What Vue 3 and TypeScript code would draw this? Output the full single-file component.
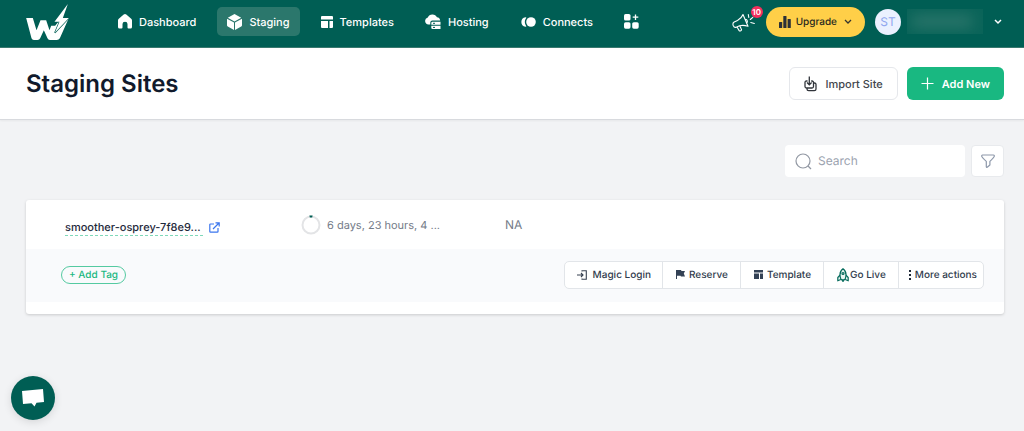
<script setup lang="ts">
import { ref } from 'vue'

const search = ref('')
const current = ref('Staging')
const nav: string[] = ['Dashboard', 'Staging', 'Templates', 'Hosting', 'Connects']
</script>

<template>
  <div class="page">
    <header class="topbar">
      <a class="logo" href="#" aria-label="Home">
        <svg viewBox="78 12 128 108" width="43" height="36" fill="#fff">
          <path d="M78 54H98L109 91L121 61H138L148 91L153 77H165L184 54H206L179 115Q176 120 170 120H149Q144 120 142 115L131 91L120 115Q118 120 112 120H101Q96 120 94 115Z" />
          <path d="M203 12L163 65H178L164 98L206 54H188Z" stroke="#005e54" stroke-width="4" />
          <path d="M203 12L163 65H178L164 98L206 54H188Z" />
        </svg>
      </a>
      <nav class="nav" aria-label="Main">
        <a v-for="item in nav" :key="item" href="#" class="nav-item" :class="{ active: item === current }" @click.prevent="current = item">
          <svg v-if="item === 'Dashboard'" viewBox="0 0 14 15" width="14" height="15" fill="#fff"><path d="M0 6.500Q0 5.500.8 4.800L5.700.6Q7-.4 8.300 .6L13.200 4.800Q14 5.500 14 6.500V13Q14 14.500 12.500 14.500H10.500Q9.500 14.500 9.500 13.500V10Q9.500 7.700 7 7.700T4.500 10V13.500Q4.500 14.500 3.500 14.500H1.500Q0 14.500 0 13Z" /></svg>
          <svg v-else-if="item === 'Staging'" viewBox="0 0 15 16" width="15" height="16" fill="#fff"><path d="M7.500 0L14.200 3.700L7.500 7.400L.8 3.700ZM0 4.700L7 8.500V16L.8 12.600Q0 12.100 0 11.200ZM15 4.700L8 8.500V16L14.200 12.600Q15 12.100 15 11.200Z" /></svg>
          <svg v-else-if="item === 'Templates'" viewBox="0 0 12 12" width="12" height="12" fill="#fff"><path d="M1 0H11Q12 0 12 1V3.500H0V1Q0 0 1 0ZM0 5H7V12H1Q0 12 0 11ZM8.500 5H12V11Q12 12 11 12H8.500Z" /></svg>
          <svg v-else-if="item === 'Hosting'" viewBox="0 0 16 15" width="16" height="15" fill="#fff"><path d="M3.500 10.500A3.500 3.500 0 0 1 2.800 3.600A5 5 0 0 1 12 3.300Q14.500 3.300 15.200 6.500H7.500Q5.300 6.500 5.300 8.500V10.500Z" /><path d="M7.500 7.700H15.500V10.800H6.300V9Q6.300 7.700 7.500 7.700ZM6.300 11.800H15.500V15H7.500Q6.300 15 6.300 13.800Z" /><path d="M8 9.300H10M8 13.400H10" stroke="#005e54" /></svg>
          <svg v-else viewBox="0 0 16 10" width="16" height="10" fill="#fff"><circle cx="11" cy="5" r="4.800" /><path d="M5.500 .2A4.850 4.850 0 0 0 5.500 9.800L6.400 9.500Q3.200 5 6.400 .5Z" /></svg>
          <span>{{ item }}</span>
        </a>
        <a class="nav-item" href="#" aria-label="Apps">
          <svg viewBox="0 0 15 15" width="15" height="15" fill="#fff"><rect width="6.500" height="6.500" rx="1.600" /><rect y="8.200" width="6.500" height="6.500" rx="1.600" /><rect x="8.200" y="8.200" width="6.500" height="6.500" rx="1.600" /><path d="M11.500 .5V6M8.700 3.200H14.300" stroke="#fff" stroke-width="1.300" /></svg>
        </a>
      </nav>
      <div class="account">
        <button class="news" type="button" aria-label="Announcements, 10 new">
          <svg viewBox="0 0 24 20" width="24" height="20" fill="none" stroke="#fff" stroke-width="1.100" stroke-linejoin="round" stroke-linecap="round"><path d="M5.500 8.500L2.200 10Q.3 11.100 1.200 13.500Q2.200 15.900 4.200 15.200L7.500 13.800Q11.500 12.800 16 14.300L11 2.500Q9.500 6.300 5.500 8.500ZM5 15L7 18.400Q7.700 19.400 8.800 18.700T9.300 17L7.800 14M13.300 7.200Q15 7.200 15.300 8.800T14.500 11M16.800 5.500L16.300 2.500M18.300 7.500L20.800 5.300M18.800 10.500L22.300 11.500" /></svg>
          <span class="badge">10</span>
        </button>
        <button class="upgrade" type="button">
          <svg viewBox="0 0 12 12" width="12" height="12" fill="#2b3037"><rect y="6" width="3.200" height="6" rx=".6" /><rect x="4.300" width="3.200" height="12" rx=".6" /><rect x="8.600" y="3" width="3.200" height="9" rx=".6" /></svg>
          <span>Upgrade</span>
          <svg viewBox="0 0 8 6" width="8" height="6" fill="none" stroke="#35342e" stroke-width="1.300"><path d="M1 1L4 4L7 1" /></svg>
        </button>
        <span class="avatar">ST</span>
        <span class="user-name" aria-hidden="true"><i></i></span>
        <button class="user-menu" type="button" aria-label="Account menu">
          <svg viewBox="0 0 8 6" width="8" height="6" fill="none" stroke="#fff" stroke-width="1.500"><path d="M1 1L4 4L7 1" /></svg>
        </button>
      </div>
    </header>

    <section class="heading">
      <h1>Staging Sites</h1>
      <div class="heading-actions">
        <button class="btn import" type="button">
          <svg viewBox="0 0 13 16" width="13" height="16" fill="none" stroke="#30343a" stroke-width="1.300"><path d="M3.500 5H2.500Q1 5 1 6.500V10.500Q1 12 2.500 12H8Q9.500 12 9.500 10.500V6.500Q9.500 5 8 5H7.200M5.300 .5V8.500M3 6.500L5.300 8.800L7.600 6.500M3 12V13Q3 14.700 4.700 14.700H10.300Q12 14.700 12 13V8.500Q12 7 10.500 7H9.500" /></svg>
          Import Site
        </button>
        <button class="btn add" type="button">
          <svg viewBox="0 0 13 13" width="13" height="13" stroke="#fff" stroke-width="1.200"><path d="M6.500 .5V12.500M.5 6.500H12.500" /></svg>
          Add New
        </button>
      </div>
    </section>

    <main>
      <div class="tools">
        <label class="search">
          <svg viewBox="0 0 17 17" width="17" height="17" fill="none" stroke="#9298a3" stroke-width="1.200"><circle cx="8" cy="8" r="7" /><path d="M13 13L16 16" /></svg>
          <input v-model="search" type="text" placeholder="Search" aria-label="Search" />
        </label>
        <button class="filter" type="button" aria-label="Filter">
          <svg viewBox="0 0 14 14" width="14" height="14" fill="none" stroke="#8d98aa" stroke-width="1.200" stroke-linejoin="round"><path d="M1.500 1H12.500Q13.400 1 13.300 2.300Q13.200 3.400 8.900 7.400V11L6.200 13.200Q5.300 13.500 5.300 12.600V7.400Q.8 3.400 .7 2.300T1.500 1Z" /></svg>
        </button>
      </div>

      <article class="card">
        <div class="site">
          <div class="name">
            <a class="site-link" href="#">smoother-osprey-7f8e9...</a>
            <a class="open" href="#" aria-label="Open site">
              <svg viewBox="0 0 11 11" width="11" height="11" fill="none" stroke="#3b76ee" stroke-width="1.200"><path d="M5 2H1.500Q.8 2 .8 2.700V9.500Q.8 10.200 1.500 10.200H8.300Q9 10.200 9 9.500V6M6.500 .8H10.200V4.500M10 1L4 7" /></svg>
            </a>
          </div>
          <div class="expiry">
            <svg viewBox="0 0 20 20" width="20" height="20" fill="none" stroke-width="2"><circle cx="10" cy="10" r="8.500" stroke="#e3e4e6" /><path d="M8.600 1.600Q10 1.300 11.400 1.600" stroke="#005e54" /></svg>
            6 days, 23 hours, 4 ...
          </div>
          <div class="na">NA</div>
        </div>
        <div class="site-actions">
          <button class="tag" type="button">+ Add Tag</button>
          <div class="group">
            <button class="login" type="button">
              <svg viewBox="0 0 10 10" width="10" height="10" fill="none" stroke="#374151" stroke-width="1.100"><path d="M0 5H6M4 3L6 5L4 7M5 1.500V.7H9.300V9.300H5V8.500" /></svg>
              Magic Login
            </button>
            <button type="button">
              <svg viewBox="0 0 9 9" width="9" height="9" fill="#334155"><path d="M0 0H5L5.500 1H9L7.800 3.500L9 6.500H5L4.500 5.700H1V9H0Z" /></svg>
              Reserve
            </button>
            <button type="button">
              <svg viewBox="0 0 9 9" width="9" height="9" fill="#334155"><path d="M0 0H9V2.500H0ZM0 3.500H5V9H0ZM6 3.500H9V9H6Z" /></svg>
              Template
            </button>
            <button class="live" type="button">
              <svg viewBox="0 0 12 14" width="12" height="14" fill="#eaf5f2" stroke="#066b5c" stroke-width="1.200" stroke-linejoin="round"><path d="M3.200 7L.8 9.500V12.800L3.800 11.500M8.800 7L11.200 9.500V12.800L8.200 11.500" /><path d="M6 .7Q9 2.700 9 6.500Q9 9.500 8 11.500H4Q3 9.500 3 6.500Q3 2.700 6 .7Z" /><circle cx="6" cy="5.500" r="1" /><path d="M4.800 11.800L6 13.500L7.200 11.800" /></svg>
              Go Live
            </button>
            <button class="more" type="button">
              <svg viewBox="0 0 2 10" width="2" height="10" fill="#1f2937"><path d="M0 0H2V2H0ZM0 4H2V6H0ZM0 8H2V10H0Z" /></svg>
              More actions
            </button>
          </div>
        </div>
      </article>
    </main>

    <button class="chat" type="button" aria-label="Open chat">
      <svg viewBox="0 0 22 18" width="22" height="18" fill="#fff"><path d="M0 2L21 0L22 13L14.500 13.700L12.500 17.500L9.500 14.200L1 15Z" /></svg>
    </button>
  </div>
</template>

<style>
body { background: #f2f3f5; }
</style>

<style scoped>
.page { min-height: 100vh; color: #111a2c; font-family: Inter, "Liberation Sans", sans-serif; font-size: 11px; line-height: 16px; text-rendering: geometricPrecision; }
.page * { box-sizing: border-box; }
button, input { margin: 0; padding: 0; border: 0; background: none; color: inherit; font: inherit; text-rendering: inherit; }
button { display: flex; align-items: center; justify-content: center; white-space: nowrap; cursor: pointer; }
a { color: inherit; text-decoration: none; }
svg { display: block; flex: none; }
.topbar { display: flex; align-items: center; height: 48px; padding: 0 20px 4px 26px; border-bottom: 1px solid #39796f; background: #005e54; color: #fff; }
.logo { margin-right: 39px; }
.nav { display: flex; align-items: center; gap: 11px; }
.nav-item { display: flex; align-items: center; gap: 7px; height: 29px; padding: 0 10px; border-radius: 5px; font-weight: 500; }
.nav-item.active { background: #2b776c; }
.account { display: flex; align-items: center; margin-left: auto; }
.news { position: relative; margin-right: 10px; }
.badge { position: absolute; top: -6px; right: -7px; width: 12px; height: 12px; border-radius: 50%; background: #f22f5d; font-size: 8px; font-weight: 600; line-height: 12px; text-align: center; }
.upgrade { gap: 5px; height: 30px; padding: 0 13px; border-radius: 15px; background: #ffcf48; color: #29291f; font-size: 10px; font-weight: 500; }
.upgrade svg:last-child { margin-left: 2px; }
.avatar { width: 26px; height: 26px; margin-left: 10px; border-radius: 50%; background: #ebf1ff; color: #91a7ef; line-height: 26px; text-align: center; }
.user-name { width: 76px; height: 25px; margin: 0 8px 0 6px; overflow: hidden; background: #0a6459; }
.user-name i { display: block; width: 60px; height: 11px; margin: 7px 5px; background: #2f786d; filter: blur(7px); }
.user-menu { width: 13px; height: 20px; }
.heading { display: flex; align-items: center; justify-content: space-between; height: 72px; padding: 0 20px 0 26px; border-bottom: 1px solid #d8dade; background: #fff; box-shadow: 0 1px 2px #0000000d; }
h1 { margin: 0; font-size: 24px; font-weight: 600; line-height: 32px; }
.heading-actions { display: flex; gap: 9px; }
.btn { gap: 8px; height: 33px; padding: 0 14px; border-radius: 6px; font-weight: 500; }
.import { border: 1px solid #e5e7eb; color: #42464d; }
.add { background: #19b881; color: #fff; font-weight: 600; }
main { padding: 25px 20px 20px 26px; }
.tools { display: flex; justify-content: flex-end; gap: 6px; margin-bottom: 23px; }
.search { display: flex; align-items: center; gap: 6px; width: 180px; height: 32px; padding: 0 10px; border-radius: 4px; background: #fff; }
.search input { flex: 1; min-width: 0; outline: none; }
.search input::placeholder { color: #9ca3af; opacity: 1; }
.filter { width: 33px; height: 32px; border: 1px solid #e8eaed; border-radius: 4px; background: #fff; }
.card { padding-bottom: 12px; border-radius: 3px; background: #fff; box-shadow: 0 1px 3px #0000002b; }
.site { display: grid; grid-template-columns: 236fr 204fr 479fr; align-items: center; height: 49px; padding: 0 20px 0 39px; }
.name, .expiry { display: flex; align-items: center; gap: 6px; white-space: nowrap; }
.name { padding-top: 6px; }
.site-link { padding-right: 2px; border-bottom: 1px dashed #7fd9b9; color: #1e293b; font-weight: 500; }
.expiry, .na { color: #747b88; }
.avatar, .search, .expiry, .na { font-size: 12px; }
.expiry { font-size: 11px; }
.site-actions { display: flex; align-items: center; justify-content: space-between; height: 53px; padding: 0 20px 2px 35px; background: #f9fafc; }
.tag { height: 18px; padding: 0 7px; border: 1px solid #55caa1; border-radius: 9px; color: #19b881; font-size: 10px; font-weight: 500; }
.group { display: flex; height: 28px; border: 1px solid #e2e5e9; border-radius: 5px; background: #fff; color: #303b4c; font-size: 10px; font-weight: 500; }
.group button { gap: 4px; padding: 0 12px 0 13px; }
.group button + button { border-left: 1px solid #e2e5e9; }
.group .login { gap: 6px; padding: 0 11px 0 12px; }
.group .live { gap: 1px; }
.group .more { padding: 0 6px 0 10px; }
.chat { position: fixed; bottom: 11px; left: 11px; width: 44px; height: 44px; border-radius: 50%; background: #005e54; box-shadow: 0 2px 8px #0000001f; }
</style>
